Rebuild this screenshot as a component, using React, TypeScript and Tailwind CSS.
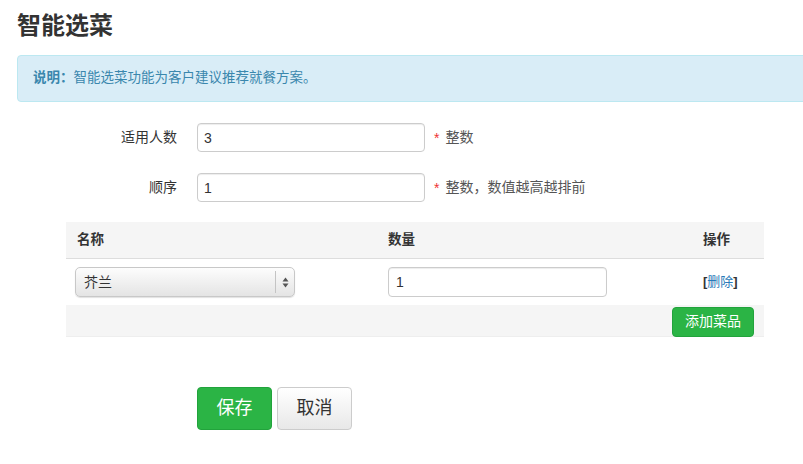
export default function App() {
  const font = { fontFamily: '"Liberation Sans", "Noto Sans CJK SC", sans-serif' }
  return (
    <div className="min-h-[464px] w-[803px] overflow-hidden bg-white pl-[17px] text-[14px] text-[#333]" style={font}>
      <h1 className="pt-[11px] text-[24px] font-bold leading-[30px] text-[#333]">智能选菜</h1>

      <div className="mt-[14px] mr-[-10px] flex h-[47px] items-center rounded-[4px] border border-[#bce8f1] bg-[#d9edf7] pl-[15px] text-[13.5px] text-[#3a87ad]">
        <span className="font-bold">说明：</span>
        <span>智能选菜功能为客户建议推荐就餐方案。</span>
      </div>

      <div className="mt-[21px] flex flex-col gap-[21px]">
        <div className="flex items-center">
          <label className="w-[160px] text-right">适用人数</label>
          <input
            defaultValue="3"
            className="ml-[20px] h-[29px] w-[228px] rounded-[4px] border border-[#ccc] px-[6px] text-[14px] text-[#333] shadow-[inset_0_1px_1px_rgba(0,0,0,0.075)] outline-none"
          />
          <span className="ml-[9px] text-[14px] leading-none text-[#e33]">*</span>
          <span className="ml-[6px] text-[#555]">整数</span>
        </div>
        <div className="flex items-center">
          <label className="w-[160px] text-right">顺序</label>
          <input
            defaultValue="1"
            className="ml-[20px] h-[29px] w-[228px] rounded-[4px] border border-[#ccc] px-[6px] text-[14px] text-[#333] shadow-[inset_0_1px_1px_rgba(0,0,0,0.075)] outline-none"
          />
          <span className="ml-[9px] text-[14px] leading-none text-[#e33]">*</span>
          <span className="ml-[6px] text-[#555]">整数，数值越高越排前</span>
        </div>
      </div>

      <div className="ml-[49px] mt-[20px] w-[698px]">
        <div className="grid h-[37px] grid-cols-[314px_315px_69px] items-center border-b border-[#ddd] bg-[#f5f5f5] text-[13.5px] font-bold">
          <div className="pl-[11px]">名称</div>
          <div className="pl-[8px]">数量</div>
          <div className="pl-[8px]">操作</div>
        </div>
        <div className="grid h-[46px] grid-cols-[314px_315px_69px] items-center">
          <div className="pl-[9px]">
            <div className="flex h-[30px] w-[220px] items-center rounded-[5px] border border-[#c8c8c8] bg-gradient-to-b from-[#fdfdfd] to-[#e4e4e4] shadow-[0_1px_1px_rgba(0,0,0,0.12)]">
              <span className="flex-1 pl-[8px] text-[#333]">芥兰</span>
              <div className="flex h-[22px] w-[19px] items-center justify-center border-l border-[#c4c4c4]">
                <svg width="7" height="11" viewBox="0 0 7 11">
                  <path d="M3.5 0.5 L6.5 4.5 L0.5 4.5 Z" fill="#555" />
                  <path d="M3.5 10.5 L6.5 6.5 L0.5 6.5 Z" fill="#555" />
                </svg>
              </div>
            </div>
          </div>
          <div className="pl-[8px]">
            <input
              defaultValue="1"
              className="h-[30px] w-[219px] rounded-[4px] border border-[#ccc] px-[7px] text-[14px] text-[#333] shadow-[inset_0_1px_1px_rgba(0,0,0,0.075)] outline-none"
            />
          </div>
          <div className="pl-[8px] text-[13px] font-bold text-[#333]">
            [<a className="font-normal text-[#2a7ab8]">删除</a>]
          </div>
        </div>
        <div className="flex h-[32px] items-center justify-end border-b border-[#eee] bg-[#f5f5f5] pr-[10px]">
          <button className="mt-[2px] h-[30px] w-[82px] rounded-[4px] border border-[#22a33c] bg-[#2bb445] text-[14px] text-white">
            添加菜品
          </button>
        </div>
      </div>

      <div className="ml-[180px] mt-[50px] flex gap-[5px]">
        <button className="h-[43px] w-[75px] rounded-[4px] border border-[#22a33c] bg-[#2bb445] text-[18px] text-white">
          保存
        </button>
        <button className="h-[43px] w-[75px] rounded-[4px] border border-[#ccc] bg-gradient-to-b from-white to-[#e8e8e8] text-[18px] text-[#333]">
          取消
        </button>
      </div>
    </div>
  )
}
